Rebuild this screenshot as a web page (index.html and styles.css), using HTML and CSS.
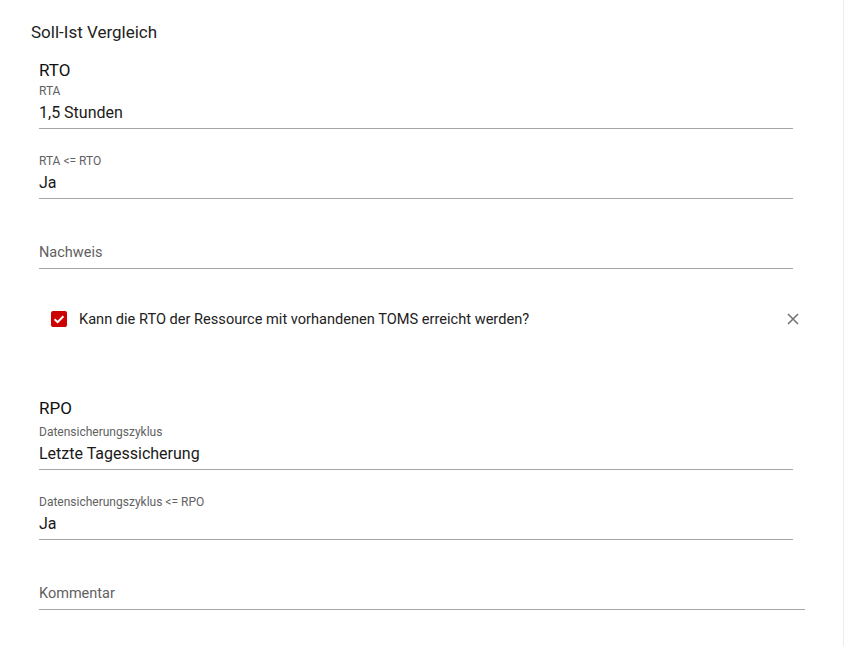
FILE: index.html
```html
<!DOCTYPE html>
<html lang="de">
<head>
<meta charset="utf-8">
<title>Soll-Ist Vergleich</title>
<link rel="stylesheet" href="styles.css">
</head>
<body>
<div class="panel">
  <h2 class="title">Soll-Ist Vergleich</h2>
  <section class="group">
    <h3 class="group-title">RTO</h3>
    <div class="field">
      <div class="label">RTA</div>
      <div class="value">1,5 Stunden</div>
    </div>
    <div class="field">
      <div class="label">RTA &lt;= RTO</div>
      <div class="value">Ja</div>
    </div>
    <div class="field">
      <div class="label"></div>
      <div class="value placeholder">Nachweis</div>
    </div>
    <div class="check-row">
      <span class="checkbox">
        <svg width="16" height="16" viewBox="0 0 16 16"><path d="M3.6 8.2 L6.6 11.1 L12.4 5.2" fill="none" stroke="#fff" stroke-width="2"/></svg>
      </span>
      <span class="check-label">Kann die RTO der Ressource mit vorhandenen TOMS erreicht werden?</span>
      <span class="clear">
        <svg width="12" height="12" viewBox="0 0 12 12"><path d="M1 1 L11 11 M11 1 L1 11" stroke="#757575" stroke-width="1.6" fill="none"/></svg>
      </span>
    </div>
  </section>
  <section class="group group-rpo">
    <h3 class="group-title">RPO</h3>
    <div class="field">
      <div class="label">Datensicherungszyklus</div>
      <div class="value">Letzte Tagessicherung</div>
    </div>
    <div class="field">
      <div class="label">Datensicherungszyklus &lt;= RPO</div>
      <div class="value">Ja</div>
    </div>
    <div class="field field-wide">
      <div class="label"></div>
      <div class="value placeholder">Kommentar</div>
    </div>
  </section>
</div>
</body>
</html>
```
FILE: styles.css
```css
* { box-sizing: border-box; }
html, body { margin: 0; padding: 0; background: #fff; }
body {
  font-family: Roboto, "Liberation Sans", Arial, sans-serif;
  color: #212121;
}
.panel {
  width: 844px;
  height: 646px;
  border-right: 1px solid #ececec;
  padding: 22px 0 0 31px;
  overflow: hidden;
}
.title {
  margin: 0;
  font-size: 17px;
  font-weight: 400;
  line-height: 20px;
  color: #222;
}
.group {
  padding-left: 8px;
  width: 774px;
}
.group-title {
  margin: 16px 0 0;
  font-size: 17px;
  font-weight: 400;
  line-height: 24px;
  color: #111;
}
.group-rpo .group-title { margin: 0 0 5px; }
.field {
  width: 754px;
  border-bottom: 1px solid #a5a5a5;
  padding-bottom: 4px;
  margin: 2px 0 25px;
}
.field-wide { width: 766px; }
.label {
  font-size: 12px;
  line-height: 14px;
  height: 14px;
  color: #616161;
  margin-bottom: 4px;
}
.value {
  font-size: 16px;
  line-height: 22px;
  color: #1a1a1a;
}
.value.placeholder {
  font-size: 14.5px;
  color: #616161;
}
.check-row {
  display: flex;
  align-items: center;
  height: 50px;
  margin-top: 1px;
  margin-bottom: 52px;
  padding-left: 12px;
  width: 766px;
}
.checkbox {
  width: 16px;
  height: 16px;
  background: #cc0000;
  border-radius: 2px;
  display: flex;
}
.check-label {
  margin-left: 12px;
  font-size: 14.6px;
  color: #222;
  flex: 1;
}
.clear {
  display: flex;
  width: 12px;
  height: 12px;
  margin-right: 6px;
}
```
